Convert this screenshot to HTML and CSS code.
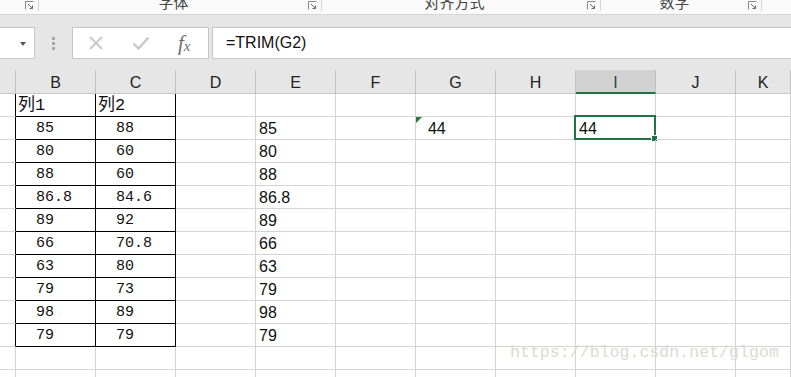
FILE: index.html
```html
<!DOCTYPE html>
<html lang="zh-CN">
<head>
    <meta charset="UTF-8">
    <title>TRIM</title>
    <link rel="stylesheet" href="styles.css">
</head>
<body>
    <div class="ribbon">
        <div class="group g0">
            <span class="launch"><svg width="9" height="9" viewBox="0 0 9 9"><path d="M0.5 8.5V0.5H8.5" fill="none" stroke="#8a8a8a"/><path d="M3 3L7.5 7.5M4.5 7.5H7.5V4.5" fill="none" stroke="#6a6a6a"/></svg></span>
        </div>
        <div class="group g1">
            <span class="glabel">字体</span>
            <span class="launch"><svg width="9" height="9" viewBox="0 0 9 9"><path d="M0.5 8.5V0.5H8.5" fill="none" stroke="#8a8a8a"/><path d="M3 3L7.5 7.5M4.5 7.5H7.5V4.5" fill="none" stroke="#6a6a6a"/></svg></span>
        </div>
        <div class="group g2">
            <span class="glabel">对齐方式</span>
            <span class="launch"><svg width="9" height="9" viewBox="0 0 9 9"><path d="M0.5 8.5V0.5H8.5" fill="none" stroke="#8a8a8a"/><path d="M3 3L7.5 7.5M4.5 7.5H7.5V4.5" fill="none" stroke="#6a6a6a"/></svg></span>
        </div>
        <div class="group g3">
            <span class="glabel">数字</span>
            <span class="launch"><svg width="9" height="9" viewBox="0 0 9 9"><path d="M0.5 8.5V0.5H8.5" fill="none" stroke="#8a8a8a"/><path d="M3 3L7.5 7.5M4.5 7.5H7.5V4.5" fill="none" stroke="#6a6a6a"/></svg></span>
        </div>
        <div class="group g4"></div>
    </div>

    <div class="fbar">
        <div class="namebox"><span class="caret"></span></div>
        <div class="grip"><i></i><i></i><i></i></div>
        <div class="fnbox">
            <svg class="fn-x" width="16" height="16" viewBox="0 0 16 16"><path d="M2 2L14 14M14 2L2 14" stroke="#c8c8c8" stroke-width="2"/></svg>
            <svg class="fn-ok" width="18" height="16" viewBox="0 0 18 16"><path d="M1.5 8.5L6.5 13.5L16.5 2.5" fill="none" stroke="#c8c8c8" stroke-width="2.4"/></svg>
            <span class="fx">f<sub>x</sub></span>
        </div>
        <div class="finput">=TRIM(G2)</div>
    </div>

    <div class="sheet">
        <div class="grid" id="grid"></div>
        <div class="watermark">https://blog.csdn.net/glgom</div>
    </div>

    <script>
        const cols = ['A', 'B', 'C', 'D', 'E', 'F', 'G', 'H', 'I', 'J', 'K'];
        const colB = ['85', '80', '88', '86.8', '89', '66', '63', '79', '98', '79'];
        const colC = ['88', '60', '60', '84.6', '92', '70.8', '80', '73', '89', '79'];

        const data = { B1: '列1', C1: '列2', G2: '  44', I2: '44' };
        colB.forEach(function(v, i) {
            data['B' + (i + 2)] = '  ' + v;
            data['C' + (i + 2)] = '  ' + colC[i];
            data['E' + (i + 2)] = v;
        });

        const grid = document.getElementById('grid');

        cols.forEach(function(c) {
            const h = document.createElement('div');
            h.className = 'hd' + (c === 'I' ? ' sel' : '');
            h.textContent = c === 'A' ? '' : c;
            grid.appendChild(h);
        });

        for (let r = 1; r <= 13; r++) {
            cols.forEach(function(c) {
                const cell = document.createElement('div');
                const key = c + r;
                cell.className = 'cell';
                if (r <= 11 && (c === 'B' || c === 'C')) cell.className += ' boxed mono';
                if (r === 1 && (c === 'B' || c === 'C')) cell.className += ' title';
                if (r <= 11 && c === 'A') cell.className += ' edge';
                if (data[key]) cell.textContent = data[key];
                if (key === 'G2') {
                    const tri = document.createElement('span');
                    tri.className = 'flag';
                    cell.appendChild(tri);
                }
                if (key === 'I2') {
                    const s = document.createElement('span');
                    s.className = 'cursor';
                    cell.appendChild(s);
                }
                grid.appendChild(cell);
            });
        }
    </script>
</body>
</html>
```

FILE: styles.css
```css
body {
    margin: 0;
    background: #e6e6e6;
    font-family: "Liberation Sans", Arial, sans-serif;
    overflow: hidden;
    height: 377px;
}

/* ribbon group labels (cut off at the top) */
.ribbon {
    display: flex;
    height: 14px;
    background: #fafafa;
    border-bottom: 1px solid #d5d5d5;
    overflow: hidden;
}

.group {
    display: flex;
    align-items: flex-start;
    height: 11px;
    border-right: 1px solid #d5d5d5;
    box-sizing: border-box;
}

.g0 { width: 39px; justify-content: flex-end; }
.g1 { width: 283px; }
.g2 { width: 279px; }
.g3 { width: 161px; }
.g4 { flex: 1; border-right: none; }

.glabel {
    flex: 1;
    text-align: center;
    font-family: "Noto Sans CJK SC", sans-serif;
    font-size: 15px;
    line-height: 15px;
    color: #444;
    margin-top: -6px;
}

.launch {
    display: block;
    width: 9px;
    height: 9px;
    margin: 1px 4px 0 0;
}

.launch svg {
    display: block;
}

/* formula bar */
.fbar {
    display: flex;
    padding: 12px 0 11px;
}

.namebox {
    width: 35px;
    height: 32px;
    box-sizing: border-box;
    background: #fff;
    border: 1px solid #c6c6c6;
    border-left: none;
    position: relative;
}

.caret {
    position: absolute;
    left: 20px;
    top: 14px;
    border-left: 3.5px solid transparent;
    border-right: 3.5px solid transparent;
    border-top: 4px solid #555;
}

.grip {
    width: 37px;
    display: flex;
    flex-direction: column;
    align-items: center;
    justify-content: center;
    gap: 2px;
}

.grip i {
    display: block;
    width: 3px;
    height: 3px;
    background: #a6a6a6;
}

.fnbox {
    width: 137px;
    height: 32px;
    box-sizing: border-box;
    background: #fff;
    border: 1px solid #c6c6c6;
    display: flex;
    align-items: center;
}

.fn-x { margin-left: 15px; }
.fn-ok { margin-left: 28px; }

.fx {
    margin-left: 28px;
    font-family: "Liberation Serif", serif;
    font-style: italic;
    font-size: 21px;
    color: #6e6e6e;
    line-height: 1;
}

.fx sub {
    font-size: 15px;
    vertical-align: -1px;
}

.finput {
    flex: 1;
    margin-left: 3px;
    height: 32px;
    box-sizing: border-box;
    background: #fff;
    border: 1px solid #c6c6c6;
    border-right: none;
    padding-left: 13px;
    font-size: 16px;
    line-height: 30px;
    color: #111;
}

/* sheet */
.sheet {
    position: relative;
    background: #fff;
}

.grid {
    display: grid;
    grid-template-columns: 16px repeat(9, 80px) 1fr;
    grid-template-rows: 24px;
    grid-auto-rows: 23px;
}

.hd {
    background: #e6e6e6;
    border-right: 1px solid #c0c0c0;
    border-bottom: 1px solid #c6c6c6;
    box-sizing: border-box;
    text-align: center;
    font-size: 16px;
    line-height: 22px;
    padding-top: 2px;
    color: #222;
}

.hd.sel {
    background: #d2d2d2;
    border-bottom: 2px solid #217346;
    color: #1f4e37;
}

.cell {
    position: relative;
    border-right: 1px solid #d4d4d4;
    border-bottom: 1px solid #d4d4d4;
    box-sizing: border-box;
    padding: 1px 0 0 3px;
    font-size: 16px;
    line-height: 22px;
    white-space: pre;
    color: #111;
}

.cell.boxed {
    border-right-color: #000;
    border-bottom-color: #000;
    padding-left: 2px;
}

.cell.edge {
    border-right-color: #000;
}

.cell.mono {
    font-family: "Liberation Mono", "Noto Sans CJK SC", monospace;
    font-size: 15px;
}

.cell.title {
    font-size: 17px;
}

.flag {
    position: absolute;
    left: 0;
    top: 0;
    border-top: 6px solid #1e7b34;
    border-right: 6px solid transparent;
}

.cursor {
    position: absolute;
    left: -2px;
    top: -2px;
    right: -1px;
    bottom: -1px;
    border: 2px solid #217346;
}

.cursor::after {
    content: "";
    position: absolute;
    right: -4px;
    bottom: -4px;
    width: 5px;
    height: 5px;
    background: #217346;
    border: 1px solid #fff;
}

.watermark {
    position: absolute;
    left: 510px;
    top: 273px;
    font-family: "Liberation Mono", monospace;
    font-size: 16.6px;
    color: #dcdad2;
}
```
